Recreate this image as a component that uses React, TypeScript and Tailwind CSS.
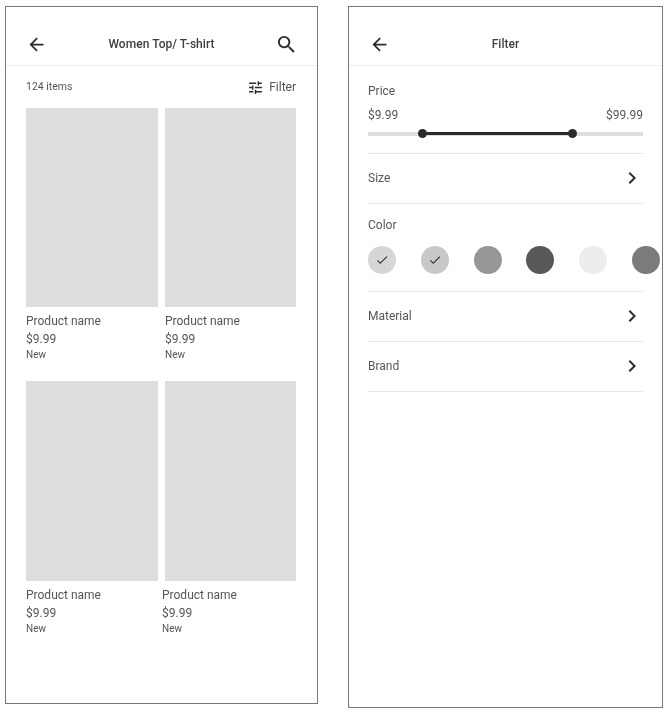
import { MdArrowBack, MdSearch, MdChevronRight, MdCheck, MdTune } from "react-icons/md";

function Header({ title, search }: { title: string; search?: boolean }) {
  return (
    <div className="h-[59px] shrink-0 border-b border-[#ededed] flex items-center justify-between pt-[16px] pl-[20px] pr-[19px] relative">
      <MdArrowBack size={21} className="text-[#2c2c2c]" />
      <div className="absolute left-0 right-0 top-[29px] text-center text-[12px] leading-[16px] font-medium text-[#3f3f3f] tracking-[0.05px]">{title}</div>
      {search ? <MdSearch size={23} className="text-[#2c2c2c]" /> : <span />}
    </div>
  );
}

function Product({ shift, tall }: { shift?: boolean; tall?: boolean }) {
  return (
    <div>
      <div className={`${tall ? "h-[200px]" : "h-[199px]"} bg-[#dddddd]`} />
      <div className={shift ? "-ml-[3px]" : ""}>
        <div className="mt-[5px] text-[12px] leading-[18px] text-[#555]">Product name</div>
        <div className="text-[12px] leading-[18px] text-[#555]">$9.99</div>
        <div className="text-[10px] leading-[14px] text-[#555]">New</div>
      </div>
    </div>
  );
}

function Row({ label, h }: { label: string; h: string }) {
  return (
    <div className={`${h} pb-[2px] flex items-center justify-between border-b border-[#e6e6e6] text-[12px] text-[#555]`}>
      <span>{label}</span>
      <MdChevronRight size={24} className="text-[#2c2c2c] -mr-[1px]" />
    </div>
  );
}

const swatches = ["bg-[#d6d6d6]", "bg-[#c8c8c8]", "bg-[#979797]", "bg-[#585858]", "bg-[#ededed]", "bg-[#7b7b7b]"];

export default function App() {
  return (
    <div className="w-[672px] h-[716px] bg-white flex items-start pt-[6px] pl-[5px] font-['Roboto',sans-serif] blur-[0.4px]">
      <div className="w-[313px] h-[698px] border border-[#777] flex flex-col">
        <Header title="Women Top/ T-shirt" search />
        <div className="flex items-center justify-between pl-[20px] pr-[21px] h-[42px] text-[#555]">
          <span className="text-[10.5px]">124 items</span>
          <span className="flex items-center gap-[5px] text-[12px]">
            <MdTune size={17} className="text-[#2c2c2c]" />
            Filter
          </span>
        </div>
        <div className="pl-[20px] pr-[20px] grid grid-cols-[132px_131px] gap-x-[7px] gap-y-[19px]">
          <Product />
          <Product />
          <Product tall />
          <Product tall shift />
        </div>
      </div>

      <div className="ml-[30px] w-[315px] h-[702px] border border-[#777] flex flex-col">
        <Header title="Filter" />
        <div className="pl-[19px]">
          <div className="h-[88px] border-b border-[#e6e6e6] w-[275px]">
            <div className="pt-[16px] text-[12px] leading-[18px] text-[#555]">Price</div>
            <div className="flex justify-between mt-[6px] text-[12px] leading-[18px] text-[#555]">
              <span>$9.99</span>
              <span>$99.99</span>
            </div>
            <div className="relative mt-[8px] h-[4px] bg-[#dddddd]">
              <div className="absolute left-[54px] w-[151px] top-[0px] h-[3px] bg-[#2a2a2a]" />
              <div className="absolute left-[50px] -top-[3px] w-[9px] h-[9px] rounded-full bg-[#2a2a2a]" />
              <div className="absolute left-[200px] -top-[3px] w-[9px] h-[9px] rounded-full bg-[#2a2a2a]" />
            </div>
          </div>
          <div className="w-[275px]">
            <Row label="Size" h="h-[50px]" />
          </div>
          <div className="h-[88px] border-b border-[#e6e6e6] w-[275px]">
            <div className="pt-[12px] text-[12px] leading-[18px] text-[#555]">Color</div>
            <div className="mt-[12px] flex gap-[24.8px] w-[292px]">
              {swatches.map((c, i) => (
                <div key={c} className={`w-[28px] h-[28px] shrink-0 rounded-full flex items-center justify-center ${c}`}>
                  {i < 2 && <MdCheck size={14} className="text-[#333]" />}
                </div>
              ))}
            </div>
          </div>
          <div className="w-[275px]">
            <Row label="Material" h="h-[50px]" />
            <Row label="Brand" h="h-[50px]" />
          </div>
        </div>
      </div>
    </div>
  );
}
